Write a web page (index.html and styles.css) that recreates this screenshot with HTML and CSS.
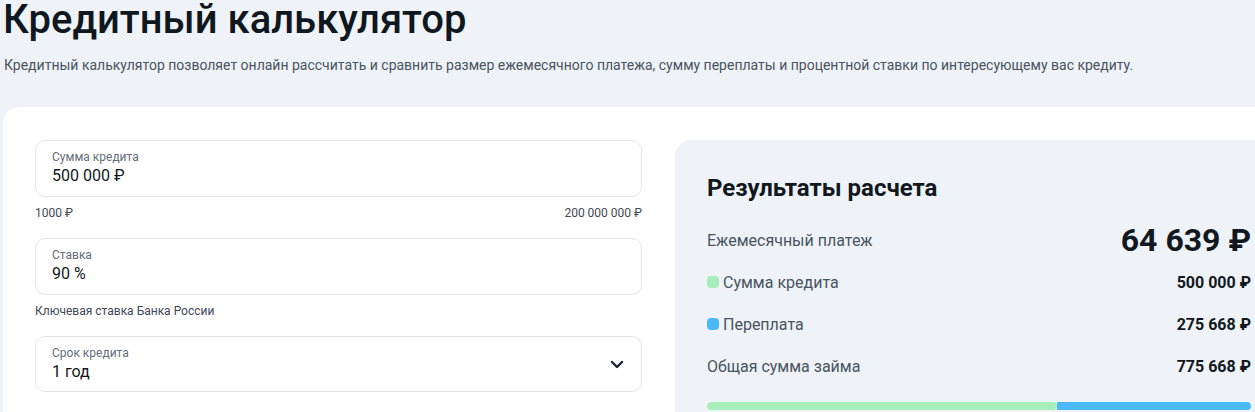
FILE: index.html
```html
<!DOCTYPE html>
<html lang="ru">
<head>
<meta charset="utf-8">
<title>Кредитный калькулятор</title>
<link rel="stylesheet" href="styles.css">
</head>
<body>
<div class="page">
  <h1 class="title">Кредитный калькулятор</h1>
  <p class="lead">Кредитный калькулятор позволяет онлайн рассчитать и сравнить размер ежемесячного платежа, сумму переплаты и процентной ставки по интересующему вас кредиту.</p>
  <div class="card">
    <div class="form">
      <div class="field">
        <div class="field-label">Сумма кредита</div>
        <div class="field-value">500 000 ₽</div>
      </div>
      <div class="hint hint-range"><span>1000 ₽</span><span>200 000 000 ₽</span></div>
      <div class="field">
        <div class="field-label">Ставка</div>
        <div class="field-value">90 %</div>
      </div>
      <div class="hint">Ключевая ставка Банка России</div>
      <div class="field field-select">
        <div class="field-body">
          <div class="field-label">Срок кредита</div>
          <div class="field-value">1 год</div>
        </div>
        <svg class="chevron" width="14" height="9" viewBox="0 0 14 9"><path d="M2 2 L7 7 L12 2" fill="none" stroke="#1b2433" stroke-width="2.4" stroke-linecap="round" stroke-linejoin="round"/></svg>
      </div>
    </div>
    <div class="results">
      <h2 class="results-title">Результаты расчета</h2>
      <div class="row row-main">
        <span class="row-label">Ежемесячный платеж</span>
        <span class="row-big">64 639 ₽</span>
      </div>
      <div class="row">
        <span class="row-label"><i class="dot dot-green"></i>Сумма кредита</span>
        <span class="row-value">500 000 ₽</span>
      </div>
      <div class="row">
        <span class="row-label"><i class="dot dot-blue"></i>Переплата</span>
        <span class="row-value">275 668 ₽</span>
      </div>
      <div class="row">
        <span class="row-label">Общая сумма займа</span>
        <span class="row-value">775 668 ₽</span>
      </div>
      <div class="bar">
        <div class="bar-green" style="width:64.3%"></div>
        <div class="bar-blue"></div>
      </div>
    </div>
  </div>
</div>
</body>
</html>
```

FILE: styles.css
```css
html, body {
  margin: 0;
  padding: 0;
  background: #eff3f8;
  overflow: hidden;
}
body {
  font-family: Roboto, "Noto Sans", Arial, sans-serif;
  color: #111820;
}
.page {
  width: 1312px;
  height: 412px;
  overflow: hidden;
  padding-left: 3px;
}
.title {
  margin: 0;
  font-size: 40px;
  line-height: 40px;
  font-weight: 500;
  color: #0f1720;
}
.lead {
  margin: 15px 0 32px 1px;
  font-size: 14px;
  line-height: 20px;
  color: #4a5360;
}
.card {
  background: #fff;
  border-radius: 16px;
  padding: 33px 32px 32px;
  display: grid;
  grid-template-columns: 607px 608px;
  column-gap: 33px;
  height: 400px;
}
.form {
  display: flex;
  flex-direction: column;
}
.field {
  border: 1px solid #e2e5ea;
  border-radius: 10px;
  padding: 8px 16px 9px;
}
.field-label {
  font-size: 12px;
  line-height: 16px;
  color: #656e7a;
}
.field-value {
  font-size: 16px;
  line-height: 22px;
  color: #111820;
}
.field-select {
  display: flex;
  align-items: center;
  justify-content: space-between;
  padding-bottom: 8px;
  padding-right: 17px;
}
.chevron {
  display: block;
}
.hint {
  font-size: 12px;
  line-height: 16px;
  color: #3f4854;
  margin: 8px 0 17px;
}
.hint-range {
  display: flex;
  justify-content: space-between;
}
.results {
  background: #eff3f8;
  border-radius: 16px;
  padding: 32px 32px 0;
  align-self: start;
  height: 300px;
}
.results-title {
  margin: 0 0 15px;
  font-size: 24px;
  line-height: 32px;
  font-weight: 700;
  color: #111820;
}
.row {
  height: 42px;
  display: flex;
  align-items: center;
  justify-content: space-between;
}
.row-label {
  font-size: 16px;
  color: #4a5360;
  display: flex;
  align-items: center;
}
.row-big {
  font-size: 32px;
  font-weight: 700;
  color: #111820;
}
.row-value {
  font-size: 16px;
  font-weight: 700;
  color: #111820;
}
.dot {
  width: 12px;
  height: 12px;
  border-radius: 4px;
  margin-right: 4px;
  display: inline-block;
}
.dot-green { background: #a6efbb; }
.dot-blue { background: #4ab9f8; }
.bar {
  margin-top: 15px;
  height: 8px;
  border-radius: 4px;
  display: flex;
  overflow: hidden;
}
.bar-green {
  background: #a6efbb;
  border-radius: 4px;
}
.bar-blue {
  flex: 1;
  background: #4ab9f8;
}
```
